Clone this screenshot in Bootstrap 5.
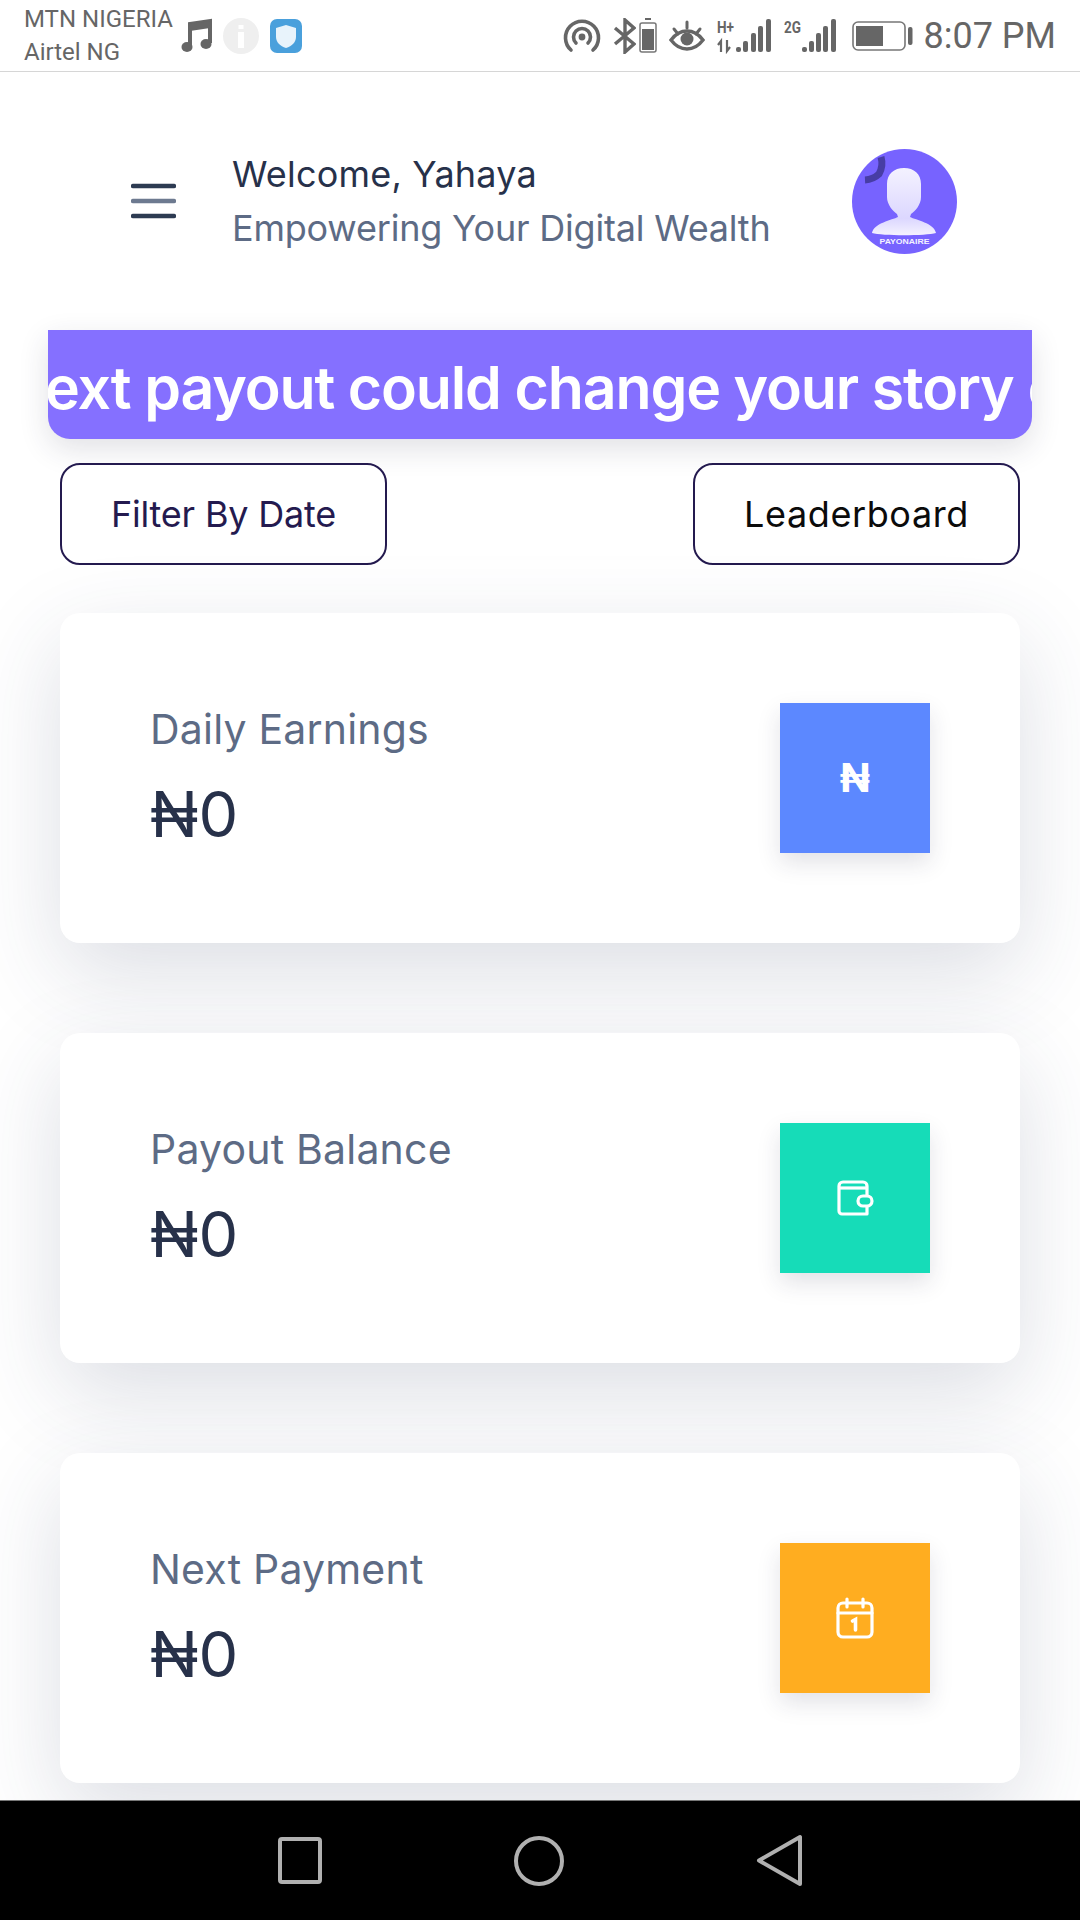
<!DOCTYPE html>
<html lang="en">
<head>
  <meta charset="UTF-8" />
  <meta name="viewport" content="width=device-width, initial-scale=1.0"/>
  <title>Dashboard</title>
  <link href="https://cdn.jsdelivr.net/npm/bootstrap@5.3.0/dist/css/bootstrap.min.css" rel="stylesheet">
  <style>
    html, body { height: 1920px; overflow: hidden; }
    body { font-family: "Inter", "Noto Sans", sans-serif; background: #fff; }
    .phone-status { height: 72px; border-bottom: 1px solid #d6d6d6; padding: 0 24px; color: #666; font-family: "Roboto", sans-serif; }
    .carrier { font-size: 24px; line-height: 33px; width: 157px; white-space: nowrap; }
    .tray-icons { gap: 11px; }
    .status-icons { gap: 12px; }
    .status-icons svg { display: block; }
    .bt-pair { gap: 3px; }
    .status-time { font-size: 36px; line-height: 1; margin-left: -1px; }
    .app-main { min-height: 0; overflow: hidden; background: #fff; }
    .app-header { height: 258px; padding: 0 123px 0 131px; }
    .burger { width: 45px; margin-right: 56px; }
    .welcome-name { font-size: 36px; line-height: 54px; color: #27314a; letter-spacing: .2px; }
    .welcome-sub { font-size: 36px; line-height: 54px; color: #5d6b85; letter-spacing: -.2px; }
    .promo-strip { height: 109px; margin: 0 48px; background: #8570ff; border-radius: 0 0 22px 22px; box-shadow: 0 10px 30px rgba(40,40,70,.14); overflow: hidden; color: #fff; font-size: 59px; font-weight: 600; white-space: nowrap; line-height: 115px; letter-spacing: -1.15px; text-indent: -3px; }
    .action-row { margin-top: 24px; padding: 0 60px; position: relative; }
    .action-btn { width: 327px; height: 102px; background: #fff; border: 2.5px solid #241a4f; border-radius: 20px; font-size: 36px; letter-spacing: -.2px; color: #241a4f; padding: 0; }
    .action-btn.dark-label { color: #0b0b0b; letter-spacing: .6px; }
    .stat-list { margin-top: 48px; padding: 0 60px; gap: 90px; }
    .stat-card { height: 330px; border: 0; border-radius: 20px; background: #fff; box-shadow: 0 30px 90px rgba(50,60,95,.17); }
    .stat-card .card-body { padding: 0 90px; }
    .stat-text { padding-bottom: 4px; }
    .stat-label { font-size: 41px; line-height: 52px; color: #5d6b85; letter-spacing: .2px; margin-bottom: 24px; }
    .stat-value { font-size: 63px; line-height: 70px; color: #27314a; }
    .stat-tile { width: 150px; height: 150px; color: #fff; box-shadow: 0 10px 22px rgba(40,40,70,.13); }
    .tile-blue { background: #5c88ff; }
    .tile-teal { background: #16dcb8; }
    .tile-amber { background: #ffad20; }
    .naira-glyph { font-size: 40px; font-weight: 700; line-height: 1; }
    .soft-keys { height: 120px; background: #000; border-top: 1px solid #777; padding-left: 16px; }
  </style>
</head>
<body class="d-flex flex-column">
  <!-- Phone status bar -->
  <div class="phone-status d-flex align-items-center flex-shrink-0">
    <div class="carrier">MTN NIGERIA<br>Airtel NG</div>
    <div class="tray-icons d-flex align-items-center">
      <svg width="31" height="36" viewBox="0 0 31 36"><path d="M9 28V6l20-3v22" fill="none" stroke="#666" stroke-width="4"/><path d="M9 6l20-3v7L9 13z" fill="#666"/><ellipse cx="6" cy="29" rx="5.5" ry="5" fill="#666"/><ellipse cx="25" cy="26" rx="5.5" ry="5" fill="#666"/></svg>
      <svg width="36" height="36" viewBox="0 0 36 36"><circle cx="18" cy="18" r="18" fill="#efefef"/><rect x="15.500" y="7" width="5" height="4" fill="#fff"/><rect x="15" y="14" width="6" height="16" fill="#fff"/></svg>
      <svg width="32" height="34" viewBox="0 0 32 34"><rect width="32" height="34" rx="7" fill="#4aa0dc"/><path d="M16 6l10 3v9c0 5-4 9-10 11-6-2-10-6-10-11V9z" fill="#e8f3fb"/></svg>
    </div>
    <div class="status-icons d-flex align-items-center ms-auto">
      <svg width="38" height="34" viewBox="0 0 38 34"><g fill="none" stroke="#666" stroke-width="3.6" stroke-linecap="round"><path d="M8 31A16.500 16.500 0 1 1 30 31"/><path d="M13 24A8.500 8.500 0 1 1 25 24"/></g><circle cx="19" cy="18" r="3.400" fill="#666"/></svg>
      <div class="bt-pair d-flex align-items-center">
        <svg width="23" height="36" viewBox="0 0 23 36"><path d="M2 10l19 16-9 8V2l9 8L2 26" fill="none" stroke="#666" stroke-width="3.400"/></svg>
        <svg width="18" height="35" viewBox="0 0 18 35"><rect x="6" y="0" width="6" height="2" fill="#666"/><rect x="1" y="5" width="16" height="29" rx="2" fill="none" stroke="#777" stroke-width="1.500"/><rect x="3" y="11" width="12" height="21" fill="#666"/></svg>
      </div>
      <svg width="36" height="32" viewBox="0 0 36 32"><path d="M2 20c9-12 23-12 32 0-9 12-23 12-32 0z" fill="none" stroke="#666" stroke-width="3.400"/><circle cx="18" cy="19" r="6.500" fill="#666"/><path d="M5 9l4 5M18 2v6M31 9l-4 5" stroke="#666" stroke-width="3" stroke-linecap="round"/></svg>
      <svg width="55" height="36" viewBox="0 0 55 36"><text x="0" y="15" font-family="Roboto, sans-serif" font-size="16" font-weight="700" fill="#666" textLength="17" lengthAdjust="spacingAndGlyphs">H+</text><path d="M4 34V23l-3 4M10 22v11l3-4" fill="none" stroke="#666" stroke-width="2.200"/><g fill="#666"><rect x="19" y="29" width="5" height="5" rx="2"/><rect x="26" y="23" width="5" height="11" rx="2"/><rect x="34" y="15" width="5" height="19" rx="2"/><rect x="41" y="8" width="5" height="26" rx="2"/><rect x="49" y="1" width="5" height="33" rx="2"/></g></svg>
      <svg width="52" height="36" viewBox="0 0 52 36"><text x="0" y="15" font-family="Roboto, sans-serif" font-size="16" font-weight="700" fill="#666" textLength="17" lengthAdjust="spacingAndGlyphs">2G</text><g fill="#666"><rect x="18" y="29" width="5" height="5" rx="2"/><rect x="25" y="23" width="5" height="11" rx="2"/><rect x="32" y="15" width="5" height="19" rx="2"/><rect x="39" y="8" width="5" height="26" rx="2"/><rect x="47" y="1" width="5" height="33" rx="2"/></g></svg>
      <svg class="ms-1" width="61" height="30" viewBox="0 0 61 30"><rect x="1" y="1" width="52" height="28" rx="5" fill="none" stroke="#777" stroke-width="1.600"/><rect x="4" y="5" width="27" height="20" fill="#666"/><rect x="56" y="6" width="4.500" height="18" rx="2" fill="#666"/></svg>
      <span class="status-time">8:07 PM</span>
    </div>
  </div>

  <div class="app-main flex-grow-1 d-flex flex-column">
    <!-- Header -->
    <div class="app-header d-flex align-items-center flex-shrink-0">
      <svg class="burger" width="45" height="36" viewBox="0 0 45 36"><g stroke="#2d3b52" stroke-width="4.500" stroke-linecap="round"><path d="M2 3h41"/><path d="M2 18h41" stroke="#6d7a90"/><path d="M2 33h41"/></g></svg>
      <div>
        <div class="welcome-name">Welcome, Yahaya</div>
        <div class="welcome-sub">Empowering Your Digital Wealth</div>
      </div>
      <svg class="ms-auto" width="105" height="105" viewBox="0 0 105 105">
        <defs><linearGradient id="bust" x1="0" y1="0" x2="0" y2="1"><stop offset="0" stop-color="#f4f2ff"/><stop offset=".75" stop-color="#dcd7ff"/><stop offset="1" stop-color="#f4f2ff"/></linearGradient></defs>
        <circle cx="52.500" cy="52.500" r="52.500" fill="#7763ff"/>
        <path d="M29 8a22 22 0 0 1-2 17a22 22 0 0 1-14 6" fill="none" stroke="#473da5" stroke-width="7"/>
        <path d="M52 19c-10 0-17 6-17 16v13c0 8 6 14 10 17l1 3c-6 3-24 6-26 16 10 3 54 3 64 0-2-10-20-13-26-16l1-3c4-3 10-9 10-17V35c0-10-7-16-17-16z" fill="url(#bust)"/>
        <text x="52.500" y="95" text-anchor="middle" font-family="Liberation Sans, sans-serif" font-size="8" font-weight="700" fill="#f4f2ff" textLength="50" lengthAdjust="spacingAndGlyphs">PAYONAIRE</text>
      </svg>
    </div>

    <!-- Promo ticker -->
    <div class="promo-strip flex-shrink-0">ext payout could change your story c</div>

    <!-- Actions -->
    <div class="action-row d-flex justify-content-between flex-shrink-0">
      <button type="button" class="btn action-btn">Filter By Date</button>
      <button type="button" class="btn action-btn dark-label">Leaderboard</button>
    </div>

    <!-- Stats -->
    <div class="stat-list d-flex flex-column flex-shrink-0">
      <div class="card stat-card">
        <div class="card-body d-flex align-items-center justify-content-between">
          <div class="stat-text">
            <div class="stat-label">Daily Earnings</div>
            <div class="stat-value">₦0</div>
          </div>
          <div class="stat-tile tile-blue d-flex align-items-center justify-content-center"><span class="naira-glyph">₦</span></div>
        </div>
      </div>
      <div class="card stat-card">
        <div class="card-body d-flex align-items-center justify-content-between">
          <div class="stat-text">
            <div class="stat-label">Payout Balance</div>
            <div class="stat-value">₦0</div>
          </div>
          <div class="stat-tile tile-teal d-flex align-items-center justify-content-center">
            <svg width="38" height="38" viewBox="0 0 38 38" fill="none" stroke="#fff" stroke-width="3.200" stroke-linejoin="round"><path d="M3 7a4 4 0 0 1 4-4h20a4 4 0 0 1 4 4v28H6a3 3 0 0 1-3-3z"/><path d="M3 9h28"/><rect x="22" y="17" width="14" height="10" rx="5" fill="#16dcb8"/></svg>
          </div>
        </div>
      </div>
      <div class="card stat-card">
        <div class="card-body d-flex align-items-center justify-content-between">
          <div class="stat-text">
            <div class="stat-label">Next Payment</div>
            <div class="stat-value">₦0</div>
          </div>
          <div class="stat-tile tile-amber d-flex align-items-center justify-content-center">
            <svg width="38" height="42" viewBox="0 0 38 42" fill="none" stroke="#fff" stroke-width="3.200" stroke-linecap="round"><rect x="2" y="6" width="34" height="34" rx="5"/><path d="M2 16h34M11 2v8M27 2v8"/><path d="M16.500 24l3-1.500V33" stroke-width="3.600"/></svg>
          </div>
        </div>
      </div>
    </div>
  </div>

  <!-- Android soft keys -->
  <div class="soft-keys d-flex align-items-center justify-content-center flex-shrink-0">
    <svg width="540" height="54" viewBox="0 0 540 54" fill="none" stroke="#b0b0b0" stroke-width="4" stroke-linejoin="round">
      <rect x="2" y="5" width="40" height="43" rx="2"/>
      <circle cx="261" cy="27" r="23"/>
      <path d="M522 3v47L481 26.500z"/>
    </svg>
  </div>
</body>
</html>
